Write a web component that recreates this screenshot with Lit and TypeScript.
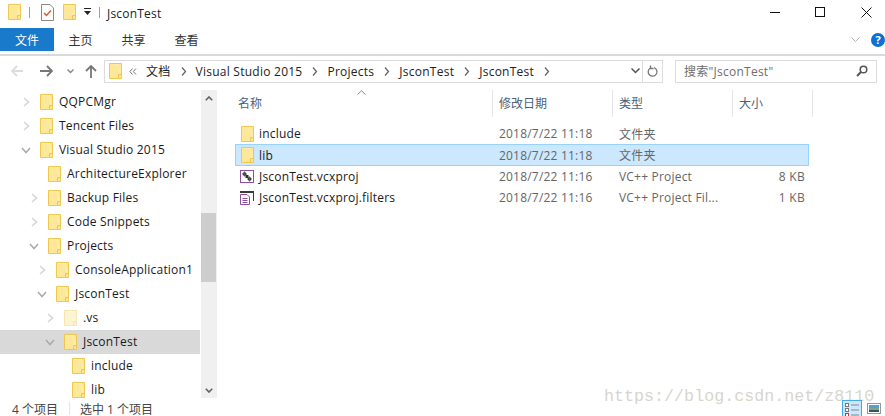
import { LitElement, html, css } from "lit";
import { customElement } from "lit/decorators.js";

const folder = (cls = "") => html`<svg class="ic ${cls}" width="13" height="16" viewBox="0 0 13 16">
  <path d="M.5.5H12.5V15.5H.5Z" fill="#fde89a" stroke="#eec84f"/>
  <path d="M1 1H9.5V11H12V8C12 5 8 2 1 1Z" fill="#fdeeb4" opacity=".6"/>
  <path d="M9.5 15.5V11.5H12.5" fill="#fbe28d" stroke="#eec84f"/>
</svg>`;

const chevR = html`<svg width="9" height="10" viewBox="0 0 9 10"><path d="M2 1L6.5 5L2 9" fill="none" stroke="#d4d4d4" stroke-width="1.5"/></svg>`;
const chevD = html`<svg width="10" height="9" viewBox="0 0 10 9"><path d="M1 2L5 6.5L9 2" fill="none" stroke="#aaa" stroke-width="1.5"/></svg>`;

type T = [string, number, "r" | "d" | "", boolean?, boolean?];
const tree: T[] = [
  ["QQPCMgr", 0, "r"],
  ["Tencent Files", 0, "r"],
  ["Visual Studio 2015", 0, "d"],
  ["ArchitectureExplorer", 1, ""],
  ["Backup Files", 1, "r"],
  ["Code Snippets", 1, "r"],
  ["Projects", 1, "d"],
  ["ConsoleApplication1", 2, "r"],
  ["JsconTest", 2, "d"],
  [".vs", 3, "r", false, true],
  ["JsconTest", 3, "d", true],
  ["include", 4, ""],
  ["lib", 4, ""],
];

const projIcon = html`<svg class="ic" width="14" height="13" viewBox="0 0 14 13">
  <rect x=".5" y=".5" width="13" height="12" fill="#fff" stroke="#8e4f9e"/>
  <rect x="3" y="2.5" width="3" height="3" fill="#2e2e2e"/>
  <rect x="5.5" y="5" width="3" height="3" fill="#2e2e2e"/>
  <rect x="8" y="7.5" width="3" height="3" fill="#2e2e2e"/>
  <path d="M2 4H7M4.5 1.5V6.5M7 9H12M9.5 6.5V11.5" stroke="#555"/>
</svg>`;
const filtIcon = html`<svg class="ic" width="14" height="14" viewBox="0 0 14 14">
  <path d="M0 0H14V10H13V2H0Z" fill="#3a3a3a"/>
  <path d="M.5 3.5H7L9.5 6V13.5H.5Z" fill="#fff" stroke="#8e4f9e"/>
  <path d="M2.5 7.5H7.5M2.5 9.5H7.5M2.5 11.5H7.5" stroke="#8e4f9e"/>
</svg>`;

@customElement("app-root")
export class AppRoot extends LitElement {
  static styles = css`
    :host {
      display: block;
      width: 885px;
      height: 416px;
      overflow: hidden;
      background: #fff;
      position: relative;
      font-family: "Open Sans", "Noto Sans CJK SC", sans-serif;
      font-size: 12px;
      color: #1a1a1a;
    }
    svg { display: block; flex: none; }
    .title { height: 28px; display: flex; align-items: center; padding: 0 0 4px 8px; box-sizing: border-box; }
    .title .sep { width: 1px; height: 11px; background: #a0a0a0; flex: none; }
    .title .name { margin: 2px 0 0 7px; letter-spacing: .2px; color: #222; }
    .qa1 { margin-left: 8px; }
    .qa2 { margin-left: 11px; }
    .qa3 { margin-left: 9px; }
    .qa4 { margin-left: 8px; }
    .qa5 { margin-left: 8px; }
    .win { margin: 2px 0 0 auto; display: flex; align-items: center; }
    .ribbon { height: 26px; display: flex; align-items: flex-start; border-bottom: 2px solid #dadada; }
    .tab { width: 53px; height: 23px; display: flex; align-items: center; justify-content: center; color: #333; }
    .tab.file { width: 54px; background: #1979ca; color: #fff; }
    .ribbon .end { margin-left: auto; display: flex; align-items: center; height: 23px; gap: 11px; }
    .help { width: 14px; height: 14px; border-radius: 50%; background: #1170cf; color: #fff; font-size: 11px; font-weight: 700; display: flex; align-items: center; justify-content: center; }
    .nav { height: 30px; margin-bottom: 4px; display: flex; align-items: center; }
    .nav .btns { width: 104px; display: flex; align-items: center; padding-left: 11px; box-sizing: border-box; flex: none; }
    .addr { width: 559px; height: 23px; border: 1px solid #dcdcdc; box-sizing: border-box; display: flex; align-items: center; flex: none; padding-left: 4px; color: #222; }
    .addr .crumb { flex: none; letter-spacing: .25px; }
    .addr .first { margin-left: 3px; }
    .addr .a-sep { margin: 0 9px 0 10px; flex: none; }
    .addr .dbl { margin: 0 6px 0 7px; }
    .addr .grow { flex: 1; }
    .addr .vbar { width: 1px; height: 21px; background: #dcdcdc; margin: 0 4px 0 2px; }
    .addr .refresh { margin-right: 3px; }
    .search { margin-left: 12px; width: 202px; height: 23px; border: 1px solid #dcdcdc; box-sizing: border-box; display: flex; align-items: center; padding: 0 8px; color: #6d6d6d; justify-content: space-between; flex: none; }
    .search span { letter-spacing: .25px; }
    .b-fwd { margin-left: 17px; }
    .b-drop { margin-left: 14px; }
    .b-up { margin-left: 11px; }
    .body { display: flex; height: 308px; }
    .side { width: 217px; flex: none; display: flex; }
    .tree { width: 201px; flex: none; }
    .row { height: 24px; box-sizing: border-box; display: flex; align-items: center; white-space: nowrap; width: 200px; overflow: hidden; }
    .row.sel { background: #d9d9d9; }
    .arr { width: 14px; flex: none; display: flex; justify-content: center; }
    .row .ic { margin: 0 6px 0 7px; }
    .row .ic.dim { opacity: .45; }
    .row .lbl { letter-spacing: .2px; margin-top: -2px; }
    .sb { width: 16px; flex: none; background: #f0f0f0; display: flex; flex-direction: column; height: 308px; }
    .sb .up, .sb .down { height: 16px; display: flex; align-items: center; justify-content: center; flex: none; }
    .sb .gap1 { height: 107px; flex: none; }
    .sb .thumb { height: 69px; background: #cdcdcd; flex: none; width: 15px; }
    .sb .gap2 { flex: 1; }
    .main { flex: 1; padding-left: 18px; position: relative; }
    .hdr { display: flex; height: 27px; color: #4c607a; position: relative; }
    .hdr > .c { height: 27px; display: flex; align-items: center; box-sizing: border-box; padding: 0 0 2px 6px; border-right: 1px solid #e5e5e5; flex: none; }
    .caret { position: absolute; left: 122px; top: 0; }
    .c1 { width: 258px; }
    .c2, .c3 { width: 120px; }
    .c4 { width: 80px; }
    .hdr > .c1 { padding-left: 3px; }
    .list { margin-top: 6px; }
    .fr { display: flex; height: 21px; align-items: center; width: 574px; box-sizing: border-box; border: 1px solid transparent; }
    .fr.sel { height: 22px; background: #cce8ff; border-color: #99d1ff; }
    .fr .n { width: 257px; flex: none; display: flex; align-items: center; padding-left: 4px; box-sizing: border-box; }
    .fr .n .slot { width: 14px; margin-right: 5px; flex: none; display: flex; justify-content: center; }
    .fr .n span { letter-spacing: .2px; }
    .fr .d, .fr .t { width: 120px; flex: none; box-sizing: border-box; padding-left: 6px; color: #666; white-space: nowrap; letter-spacing: .2px; }
    .fr .s { width: 72px; text-align: right; color: #666; flex: none; letter-spacing: .3px; }
    .status { height: 24px; display: flex; align-items: center; padding: 0 0 3px 12px; color: #444; box-sizing: border-box; }
    .status .vs { width: 1px; height: 13px; background: #e5e5e5; margin: 0 10px 0 11px; }
    .mark { position: absolute; left: 604px; top: 387px; font-family: "Liberation Mono", monospace; font-size: 16.7px; color: #d8d5cd; white-space: nowrap; }
    .views { position: absolute; left: 842px; top: 400px; display: flex; gap: 5px; align-items: flex-start; }
    .v2 { margin-top: 3px; }
  `;

  render() {
    const files = [
      { i: folder(), n: "include", d: "2018/7/22 11:18", t: "文件夹", s: "" },
      { i: folder(), n: "lib", d: "2018/7/22 11:18", t: "文件夹", s: "", sel: true },
      { i: projIcon, n: "JsconTest.vcxproj", d: "2018/7/22 11:16", t: "VC++ Project", s: "8 KB" },
      { i: filtIcon, n: "JsconTest.vcxproj.filters", d: "2018/7/22 11:16", t: "VC++ Project Fil...", s: "1 KB" },
    ];
    const crumbSep = html`<svg class="a-sep" width="6" height="9" viewBox="0 0 6 9"><path d="M1 .5L4.5 4.5L1 8.5" fill="none" stroke="#666" stroke-width="1.3"/></svg>`;
    return html`
      <div class="title">
        ${folder()}
        <div class="sep qa1"></div>
        <svg class="qa2" width="13" height="17" viewBox="0 0 13 17"><path d="M.5.5H9L12.5 4V16.5H.5Z" fill="#fff" stroke="#888"/><path d="M3 9L5.5 11.5L10 6.5" fill="none" stroke="#e0592a" stroke-width="1.5"/></svg>
        <span class="qa3">${folder()}</span>
        <svg class="qa4" width="7" height="8" viewBox="0 0 7 8"><path d="M0 0H7V1H0ZM0 3H7L3.5 7Z" fill="#222"/></svg>
        <div class="sep qa5"></div>
        <span class="name">JsconTest</span>
        <div class="win">
          <svg width="44" height="12" viewBox="0 0 44 12"><path d="M22 5.5H32" stroke="#111"/></svg>
          <svg width="47" height="12" viewBox="0 0 47 12"><rect x="23.5" y=".5" width="9" height="9" fill="none" stroke="#111"/></svg>
          <svg width="46" height="12" viewBox="0 0 46 12"><path d="M22.5 .5L32.5 10.5M32.5 .5L22.5 10.5" stroke="#111"/></svg>
        </div>
      </div>
      <div class="ribbon">
        <div class="tab file">文件</div>
        <div class="tab">主页</div>
        <div class="tab">共享</div>
        <div class="tab">查看</div>
        <div class="end">
          <svg width="9" height="6" viewBox="0 0 9 6"><path d="M.5 .5L4.5 4.5L8.5 .5" fill="none" stroke="#b5b5b5"/></svg>
          <div class="help">?</div>
        </div>
      </div>
      <div class="nav">
        <div class="btns">
          <svg width="12" height="12" viewBox="0 0 12 12"><path d="M6 1L1 6L6 11M1 6H12" fill="none" stroke="#dcdcdc" stroke-width="1.8"/></svg>
          <svg class="b-fwd" width="13" height="12" viewBox="0 0 13 12"><path d="M7 1L12 6L7 11M12 6H0" fill="none" stroke="#777" stroke-width="1.8"/></svg>
          <svg class="b-drop" width="7" height="5" viewBox="0 0 7 5"><path d="M.5 .5L3.5 3.5L6.5 .5" fill="none" stroke="#888" stroke-width="1.4"/></svg>
          <svg class="b-up" width="12" height="13" viewBox="0 0 12 13"><path d="M1 6L6 1L11 6M6 1V13" fill="none" stroke="#777" stroke-width="1.8"/></svg>
        </div>
        <div class="addr">
          ${folder()}
          <svg class="dbl" width="8" height="7" viewBox="0 0 8 7"><path d="M3.5 .5L.8 3.5L3.5 6.5M7 .5L4.3 3.5L7 6.5" fill="none" stroke="#777"/></svg>
          <span class="crumb first">文档</span>${crumbSep}
          <span class="crumb">Visual Studio 2015</span>${crumbSep}
          <span class="crumb">Projects</span>${crumbSep}
          <span class="crumb">JsconTest</span>${crumbSep}
          <span class="crumb">JsconTest</span>${crumbSep}
          <div class="grow"></div>
          <svg width="9" height="6" viewBox="0 0 9 6"><path d="M.5 .5L4.5 4.5L8.5 .5" fill="none" stroke="#555" stroke-width="1.5"/></svg>
          <div class="vbar"></div>
          <svg class="refresh" width="12" height="13" viewBox="0 0 12 13"><path d="M7 2.6A4.4 4.4 0 1 1 3 3.2M3.5 .5V3.5H6.5" fill="none" stroke="#777" stroke-width="1.3"/></svg>
        </div>
        <div class="search">
          <span>搜索"JsconTest"</span>
          <svg width="12" height="12" viewBox="0 0 12 12"><circle cx="7.5" cy="4.5" r="3.3" fill="none" stroke="#555" stroke-width="1.5"/><path d="M5 7L1 11" stroke="#555" stroke-width="2"/></svg>
        </div>
      </div>
      <div class="body">
        <div class="side">
          <div class="tree">
            ${tree.map(([n, lvl, a, sel, dim]) => html`
              <div class="row ${sel ? "sel" : ""}" style="padding-left:${19 + lvl * 8}px">
                <span class="arr">${a === "r" ? chevR : a === "d" ? chevD : ""}</span>
                ${folder(dim ? "dim" : "")}
                <span class="lbl">${n}</span>
              </div>`)}
          </div>
          <div class="sb">
            <div class="up"><svg width="8" height="5" viewBox="0 0 8 5"><path d="M.8 4.2L4 1L7.2 4.2" fill="none" stroke="#606060" stroke-width="1.6"/></svg></div>
            <div class="gap1"></div>
            <div class="thumb"></div>
            <div class="gap2"></div>
            <div class="down"><svg width="8" height="5" viewBox="0 0 8 5"><path d="M.8 .8L4 4L7.2 .8" fill="none" stroke="#606060" stroke-width="1.6"/></svg></div>
          </div>
        </div>
        <div class="main">
          <div class="hdr">
            <svg class="caret" width="9" height="5" viewBox="0 0 9 5"><path d="M.5 4.5L4.5 .8L8.5 4.5" fill="none" stroke="#888"/></svg>
            <div class="c c1">名称</div><div class="c c2">修改日期</div><div class="c c3">类型</div><div class="c c4">大小</div>
          </div>
          <div class="list">
            ${files.map((f) => html`
              <div class="fr ${f.sel ? "sel" : ""}">
                <div class="n"><div class="slot">${f.i}</div><span>${f.n}</span></div>
                <div class="d">${f.d}</div>
                <div class="t">${f.t}</div>
                <div class="s">${f.s}</div>
              </div>`)}
          </div>
        </div>
      </div>
      <div class="status">
        <span>4 个项目</span><div class="vs"></div><span>选中 1 个项目</span>
      </div>
      <div class="mark">https://blog.csdn.net/z8110</div>
      <div class="views">
        <svg width="20" height="16" viewBox="0 0 20 16">
          <rect x=".5" y=".5" width="19" height="19" fill="#cce8ff" stroke="#4aa8e8"/>
          <rect x="3.5" y="3.5" width="3" height="3" fill="#fff" stroke="#777"/>
          <rect x="3.5" y="8.5" width="3" height="3" fill="#fff" stroke="#777"/>
          <rect x="3.5" y="13.5" width="3" height="3" fill="#fff" stroke="#c33"/>
          <path d="M9 5H17M9 10H17M9 15H17" stroke="#7a8a98"/>
        </svg>
        <svg class="v2" width="14" height="11" viewBox="0 0 14 11">
          <rect x=".5" y=".5" width="13" height="10" fill="#fff" stroke="#999"/>
          <rect x="2" y="2" width="10" height="3" fill="#4f9fd8"/>
          <rect x="2" y="5" width="10" height="2" fill="#7fa08a"/>
          <rect x="2" y="7" width="10" height="2" fill="#2f5a5a"/>
        </svg>
      </div>
    `;
  }
}
